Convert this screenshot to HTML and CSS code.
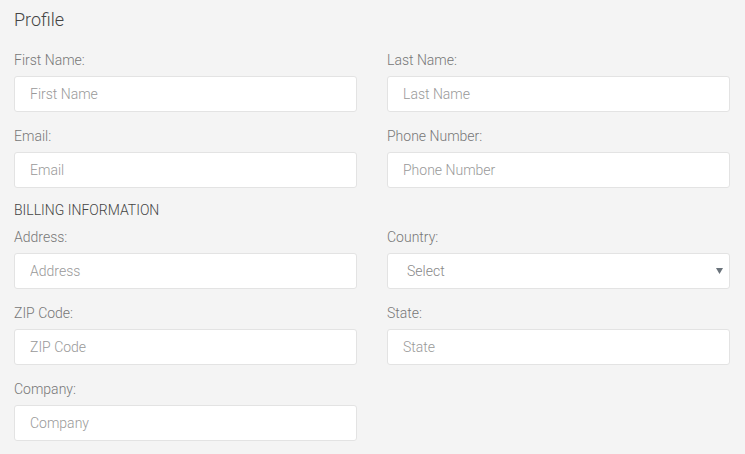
FILE: index.html
```html
<!DOCTYPE html>
<html>
<head>
<meta charset="utf-8">
<link rel="stylesheet" href="styles.css">
</head>
<body>
<div class="page">
  <h1 class="title">Profile</h1>
  <div class="grid">
    <div class="field"><label>First Name:</label><input type="text" placeholder="First Name"></div>
    <div class="field"><label>Last Name:</label><input type="text" placeholder="Last Name"></div>
    <div class="field"><label>Email:</label><input type="text" placeholder="Email"></div>
    <div class="field"><label>Phone Number:</label><input type="text" placeholder="Phone Number"></div>
    <div class="section">BILLING INFORMATION</div>
    <div class="field"><label>Address:</label><input type="text" placeholder="Address"></div>
    <div class="field"><label>Country:</label><div class="select"><span>Select</span><svg class="arrow" width="7" height="6" viewBox="0 0 7 6"><path d="M0 0H7L3.5 6Z" fill="#6a737b"/></svg></div></div>
    <div class="field"><label>ZIP Code:</label><input type="text" placeholder="ZIP Code"></div>
    <div class="field"><label>State:</label><input type="text" placeholder="State"></div>
    <div class="field"><label>Company:</label><input type="text" placeholder="Company"></div>
  </div>
</div>
</body>
</html>
```
FILE: styles.css
```css
html, body {
  margin: 0;
  padding: 0;
  background: #f4f4f4;
}
body {
  font-family: Roboto, "Liberation Sans", sans-serif;
}
.page {
  padding: 9px 15px 0 14px;
}
.title {
  margin: 0;
  font-size: 18px;
  line-height: 22px;
  font-weight: 300;
  color: #444;
}
.grid {
  margin-top: 21px;
  display: grid;
  grid-template-columns: 1fr 1fr;
  column-gap: 30px;
  row-gap: 16px;
}
.field {
  display: flex;
  flex-direction: column;
  gap: 8px;
}
.field label {
  font-size: 14px;
  line-height: 16px;
  font-weight: 300;
  color: #777;
}
.section {
  grid-column: 1 / -1;
  font-size: 14px;
  line-height: 16px;
  font-weight: 300;
  color: #444;
  margin-top: -2px;
  margin-bottom: -5px;
}
input, .select {
  box-sizing: border-box;
  height: 36px;
  width: 100%;
  margin: 0;
  border: 1px solid #e3e3e3;
  border-radius: 3px;
  background: #fff;
  font-family: Roboto, "Liberation Sans", sans-serif;
  font-size: 14px;
  font-weight: 300;
  padding: 0 15px;
  color: #555;
  outline: none;
}
input::placeholder {
  color: #999;
}
.select {
  display: flex;
  align-items: center;
  justify-content: space-between;
  padding: 0 6px 0 19px;
  color: #888;
}
.arrow {
  display: block;
}
```
